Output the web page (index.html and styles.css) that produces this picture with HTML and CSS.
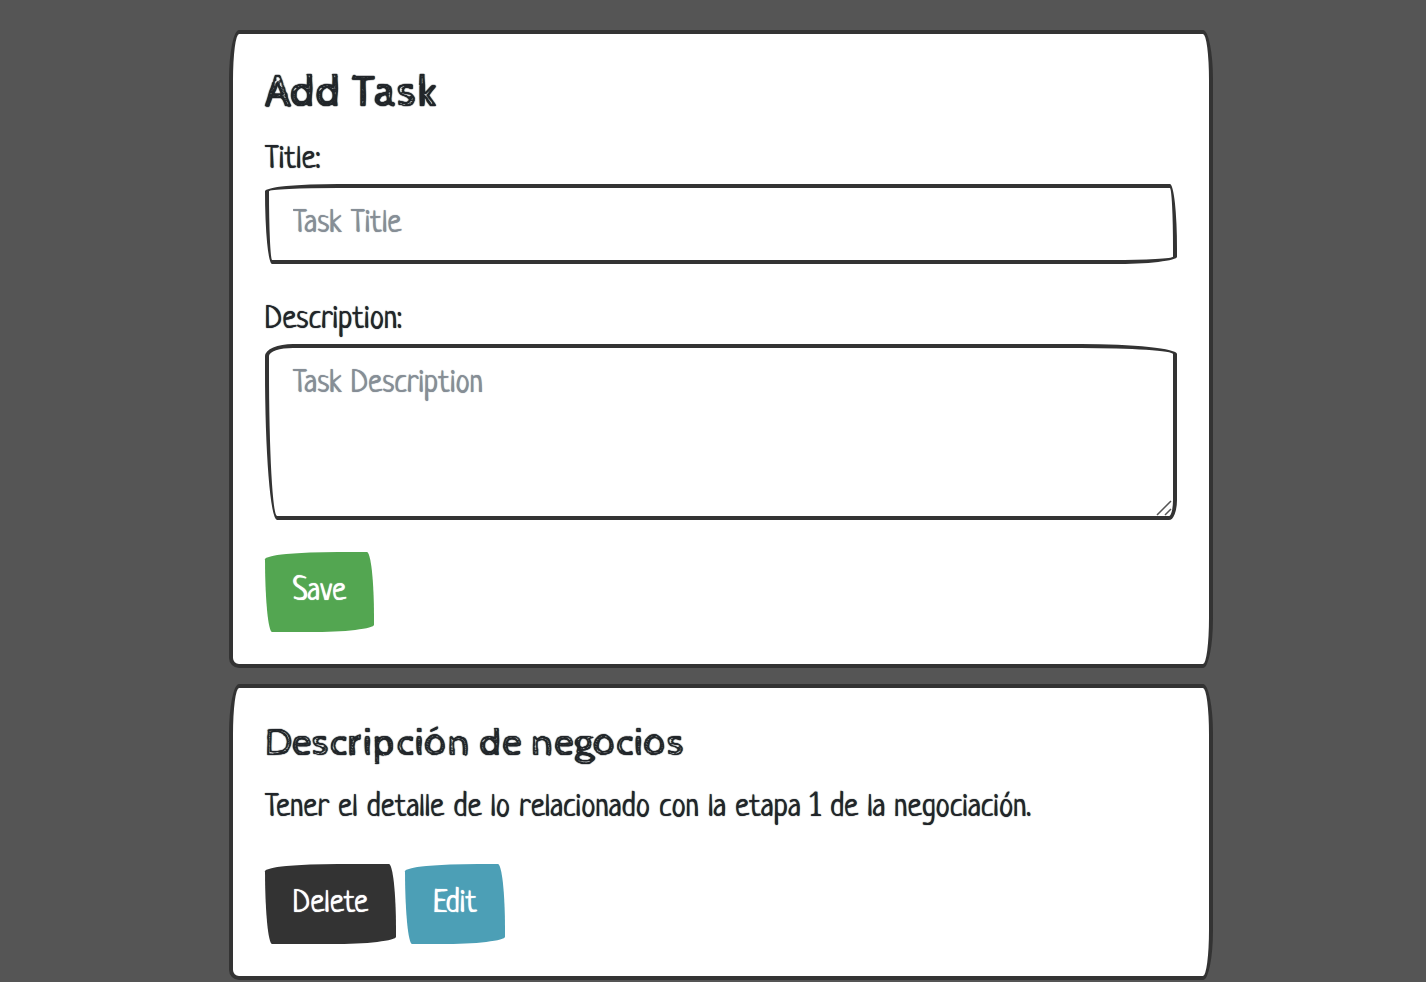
FILE: index.html
```html
<!DOCTYPE html>
<html lang="en">
<head>
<meta charset="utf-8">
<meta name="viewport" content="width=device-width, initial-scale=1">
<title>Tasks</title>
<link rel="stylesheet" href="styles.css">
</head>
<body>
<main class="container">
  <form class="card">
    <h1 class="form-title">Add Task</h1>
    <div class="form-group">
      <label for="title">Title:</label>
      <input class="form-control" id="title" type="text" placeholder="Task Title">
    </div>
    <div class="form-group">
      <label for="description">Description:</label>
      <div class="textarea-wrap">
        <textarea class="form-control form-area" id="description" placeholder="Task Description"></textarea>
        <svg class="grip" viewBox="0 0 16 16" aria-hidden="true"><path d="M1 15 15 1M9 15l6-6"/></svg>
      </div>
    </div>
    <div class="actions"><button class="btn btn-success" type="button">Save</button></div>
  </form>
  <article class="card">
    <h2 class="card-title">Descripción de negocios</h2>
    <p class="card-text">Tener el detalle de lo relacionado con la etapa 1 de la negociación.</p>
    <div class="actions">
      <button class="btn btn-dark" type="button">Delete</button>
      <button class="btn btn-info" type="button">Edit</button>
    </div>
  </article>
</main>
</body>
</html>
```
FILE: styles.css
```css
* { box-sizing: border-box; }
body {
  margin: 0;
  padding-left: 16px;
  background: #555;
  color: #212529;
  font-family: Neucha, "Liberation Sans Narrow", "Roboto Condensed", "Open Sans Condensed", Roboto, sans-serif;
  font-size: 32px;
  line-height: 48px;
  text-shadow: 0 0 1px currentColor;
}
.container {
  display: flex;
  flex-direction: column;
  gap: 16px;
  width: 69vw;
  margin: 0 auto;
  padding-top: 30px;
}
.card {
  background: #fff;
  border: 4px solid #333;
  border-radius: 10px / 50px 50px 50px 10px;
  padding: 32px;
}
.form-title, .card-title {
  margin: 0 0 16px;
  font-family: "Cabin Sketch", Lato, sans-serif;
  font-size: 40px;
  font-weight: 500;
  line-height: 48px;
  text-shadow: 0 0 1px currentColor, 0 0 1px currentColor;
}
.form-title {
  font-size: 45px;
  line-height: 54px;
  text-shadow: 0 0 1px currentColor, 0 0 1px currentColor, 0 0 1px currentColor;
}
.form-group { margin-bottom: 32px; }
label { display: block; }
.form-control {
  display: block;
  width: 100%;
  height: 80px;
  padding: 12px 24px;
  border: 4px solid #333;
  border-radius: 510px 50px 450px 50px / 50px 450px 50px 510px;
  background: #fff;
  color: #212529;
  font: inherit;
  text-shadow: inherit;
}
.form-control::placeholder { color: #868e96; opacity: 1; text-shadow: 0 0 1px #868e96; }
.textarea-wrap { position: relative; }
.form-area {
  height: 176px;
  resize: none;
  border-radius: 28px 96px 8px 12px / 12px 10px 20px 150px;
}
.grip {
  position: absolute;
  right: 5px;
  bottom: 4px;
  width: 16px;
  height: 16px;
  fill: none;
  stroke: #555;
  stroke-width: 1.5;
}
.card-text { margin: 0 0 32px; }
.actions { display: flex; gap: 9px; }
.btn {
  height: 80px;
  padding: 16px 28px;
  border: 0;
  border-radius: 510px 50px 450px 50px / 50px 450px 50px 510px;
  color: #fff;
  font: inherit;
  text-shadow: 0 0 1px #fff;
}
.btn-success { background: #53a651; }
.btn-dark { background: #333; }
.btn-info { background: #4c9fb6; }
```
